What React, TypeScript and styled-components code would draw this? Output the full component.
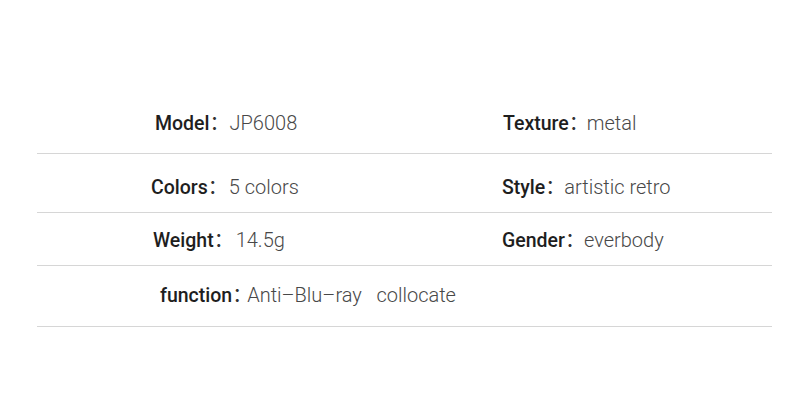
import React from "react";
import styled, { createGlobalStyle } from "styled-components";

const Global = createGlobalStyle`
  html, body { margin: 0; padding: 0; background: #ffffff; }
  body { width: 800px; height: 404px; overflow: hidden; }
`;

const Sheet = styled.div`
  box-sizing: border-box;
  width: 800px;
  height: 404px;
  padding: 92px 28px 0 37px;
  background: #ffffff;
`;

const Row = styled.div<{ $pt: number; $pb: number }>`
  display: grid;
  grid-template-columns: 465px 1fr;
  padding-top: ${(p) => p.$pt}px;
  padding-bottom: ${(p) => p.$pb}px;
  border-bottom: 1px solid #d6d6d6;
`;

const Cell = styled.div<{ $indent: number }>`
  display: flex;
  align-items: baseline;
  height: 24px;
  line-height: 24px;
  padding-left: ${(p) => p.$indent}px;
  white-space: pre;
`;

const Label = styled.span`
  font-family: Roboto, "Liberation Sans", sans-serif;
  font-weight: 500;
  font-size: 19.5px;
  color: #1e1e1e;
`;

const Colon = styled.span<{ $w: number }>`
  font-family: "Noto Sans CJK SC", sans-serif;
  font-size: 20px;
  letter-spacing: ${(p) => p.$w - 20}px;
  color: #333;
`;

const Value = styled.span`
  font-family: Roboto, "Liberation Sans", sans-serif;
  font-weight: 300;
  font-size: 20px;
  color: #484848;
`;

type Item = { label: string; value: string; indent: number; gap: number };

const Field = ({ item }: { item: Item | null }) =>
  item ? (
    <Cell $indent={item.indent}>
      <Label>{item.label}</Label>
      <Colon $w={item.gap}>：</Colon>
      <Value>{item.value}</Value>
    </Cell>
  ) : (
    <Cell $indent={0} />
  );

const rows: { pt: number; pb: number; left: Item; right: Item | null }[] = [
  {
    pt: 18,
    pb: 19,
    left: { label: "Model", value: "JP6008", indent: 118, gap: 20 },
    right: { label: "Texture", value: "metal", indent: 1, gap: 18 },
  },
  {
    pt: 20,
    pb: 14,
    left: { label: "Colors", value: "5 colors", indent: 114, gap: 21 },
    right: { label: "Style", value: "artistic retro", indent: 0, gap: 19 },
  },
  {
    pt: 14,
    pb: 14,
    left: { label: "Weight", value: "14.5g", indent: 116, gap: 22 },
    right: { label: "Gender", value: "everbody", indent: 0, gap: 19 },
  },
  {
    pt: 16,
    pb: 20,
    left: { label: "function", value: "Anti–Blu–ray   collocate", indent: 123, gap: 15 },
    right: null,
  },
];

export default function App() {
  return (
    <>
      <Global />
      <Sheet>
        {rows.map((r, i) => (
          <Row key={i} $pt={r.pt} $pb={r.pb}>
            <Field item={r.left} />
            <Field item={r.right} />
          </Row>
        ))}
      </Sheet>
    </>
  );
}
